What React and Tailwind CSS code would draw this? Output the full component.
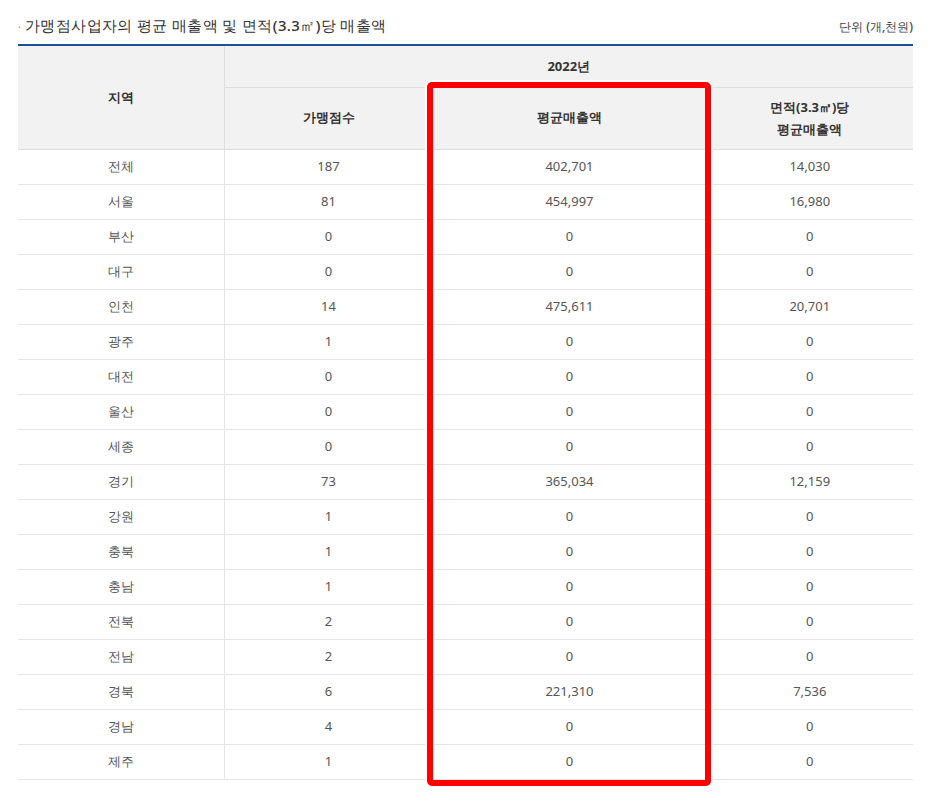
import React from "react";

const rows = [
  ["전체", "187", "402,701", "14,030"],
  ["서울", "81", "454,997", "16,980"],
  ["부산", "0", "0", "0"],
  ["대구", "0", "0", "0"],
  ["인천", "14", "475,611", "20,701"],
  ["광주", "1", "0", "0"],
  ["대전", "0", "0", "0"],
  ["울산", "0", "0", "0"],
  ["세종", "0", "0", "0"],
  ["경기", "73", "365,034", "12,159"],
  ["강원", "1", "0", "0"],
  ["충북", "1", "0", "0"],
  ["충남", "1", "0", "0"],
  ["전북", "2", "0", "0"],
  ["전남", "2", "0", "0"],
  ["경북", "6", "221,310", "7,536"],
  ["경남", "4", "0", "0"],
  ["제주", "1", "0", "0"],
];

export default function App() {
  return (
    <div className="w-[936px] h-[804px] bg-white font-['Noto_Sans_CJK_KR',sans-serif] text-[13px] text-[#555] overflow-hidden">
      <div className="mx-[18px] w-[895px] pt-[10px]">
        <div className="flex items-end justify-between h-[34px] pb-[8px]">
          <div className="text-[15px] text-[#333] font-medium tracking-wide">
            <span className="text-[#999] text-[10px] mr-1">·</span>가맹점사업자의 평균 매출액 및 면적(3.3㎡)당 매출액
          </div>
          <div className="text-[12px] text-[#444] font-medium">단위 (개,천원)</div>
        </div>
        <div className="relative">
          <table className="w-full border-collapse border-t-2 border-[#1f4e9a] table-fixed">
            <colgroup>
              <col className="w-[206px]" />
              <col className="w-[209px]" />
              <col className="w-[273px]" />
              <col />
            </colgroup>
            <thead className="bg-[#f2f2f2] text-[#333] font-bold">
              <tr className="h-[42px]">
                <th rowSpan={2} className="border-r border-b border-[#ddd] font-bold">지역</th>
                <th colSpan={3} className="border-b border-[#ddd] font-bold">2022년</th>
              </tr>
              <tr className="h-[62px]">
                <th className="border-r border-b border-[#ddd] font-bold">가맹점수</th>
                <th className="border-r border-b border-[#ddd] font-bold">평균매출액</th>
                <th className="border-b border-[#ddd] font-bold leading-[22px]">면적(3.3㎡)당<br />평균매출액</th>
              </tr>
            </thead>
            <tbody>
              {rows.map((r) => (
                <tr key={r[0]} className="h-[35px]">
                  {r.map((c, i) => (
                    <td key={i} className={"text-center border-b border-[#e5e5e5] " + (i < 3 ? "border-r" : "")}>
                      {c}
                    </td>
                  ))}
                </tr>
              ))}
            </tbody>
          </table>
          <div className="absolute left-[409px] top-[38px] w-[284px] h-[704px] rounded-[5px] border-[6px] border-[#ff0000] ring-2 ring-white pointer-events-none" />
        </div>
      </div>
    </div>
  );
}
